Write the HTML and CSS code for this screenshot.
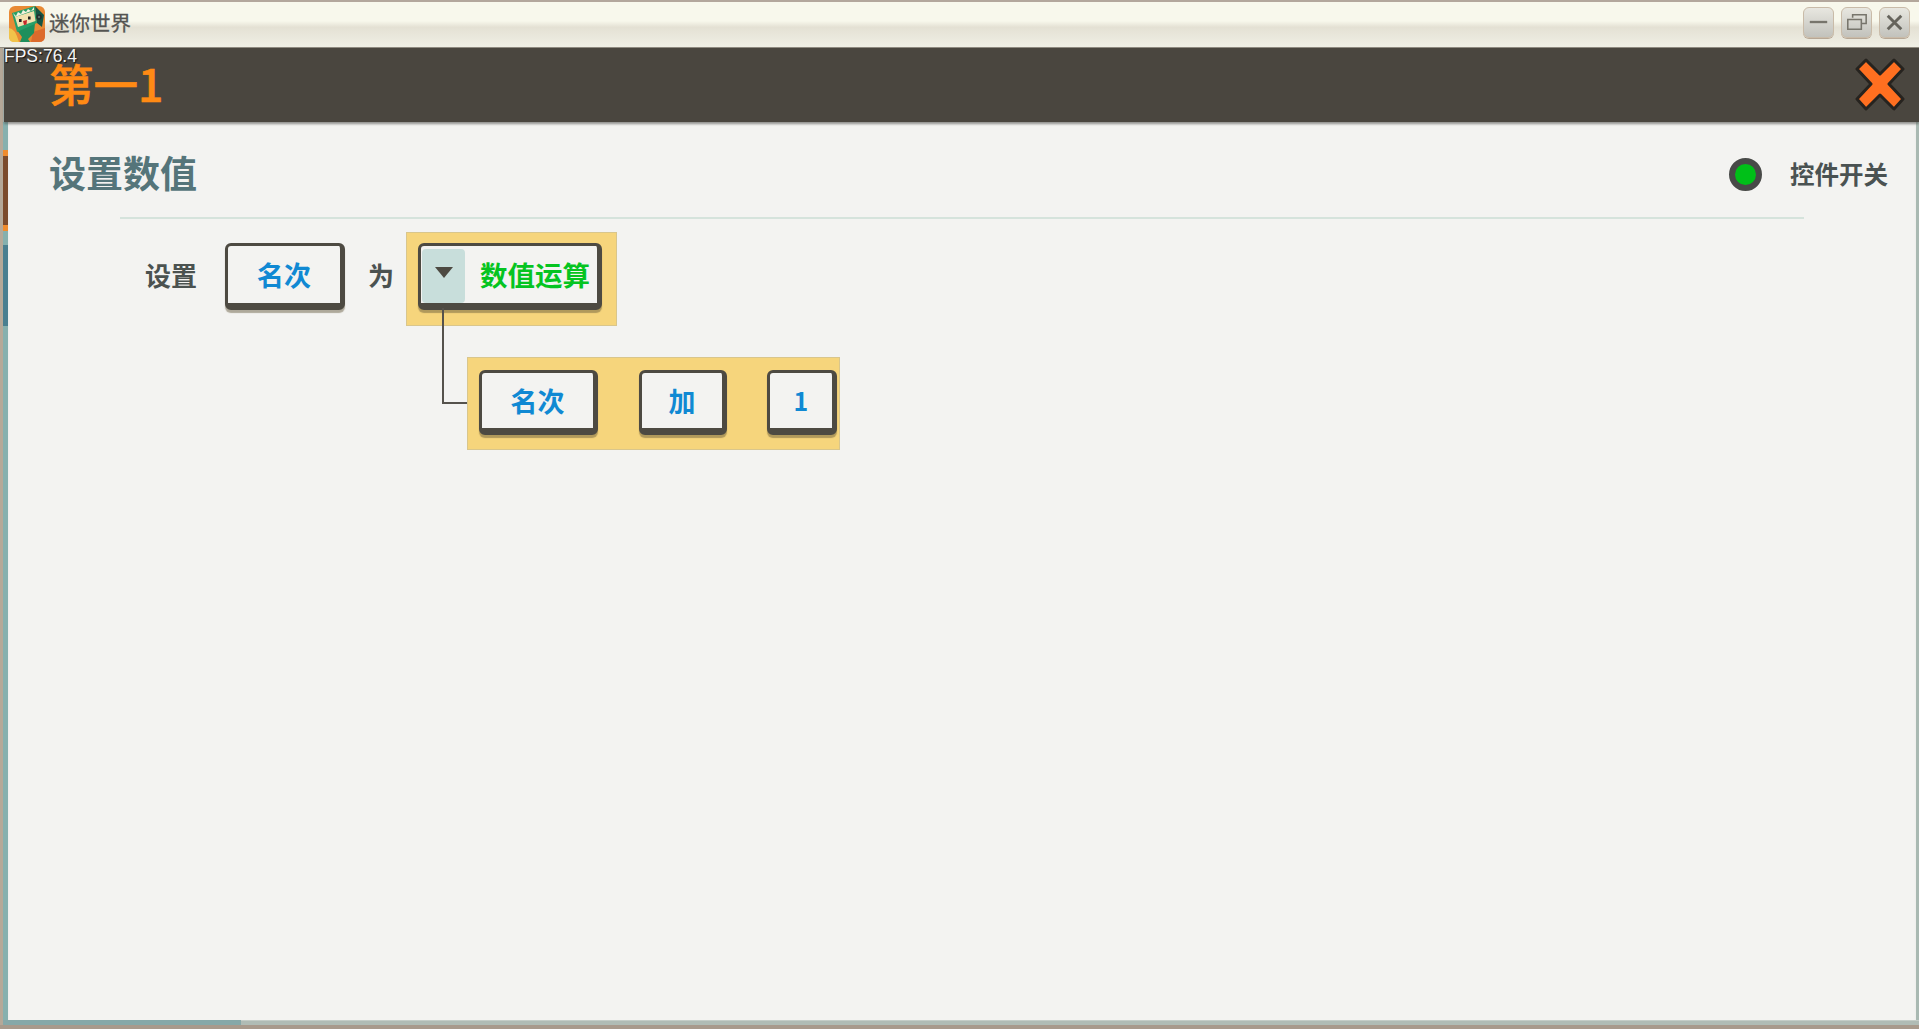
FILE: index.html
```html
<!DOCTYPE html>
<html lang="zh">
<head>
<meta charset="utf-8">
<title>迷你世界</title>
<link rel="stylesheet" href="styles.css">
</head>
<body>
<div class="window">
  <header class="titlebar">
    <svg class="app-icon" viewBox="0 0 36 36">
      <rect width="36" height="36" rx="6" fill="#e88a34"/>
      <path d="M0 22 Q6 22 10 36 H5 Q0 36 0 31Z" fill="#f1c34a"/>
      <path d="M24 26 L36 22 V30 Q36 36 30 36 H22Z" fill="#dc6a2c"/>
      <path d="M8 24 L26 17 L25 27 L19 33 L21 36 H11 L13 31Z" fill="#1e8f5c"/>
      <path d="M3 7 L26 0 L28 17 L8 26Z" fill="#28a068"/>
      <path d="M26 0 L35 9 L33 21 L28 17Z" fill="#155443"/>
      <path d="M6 11 L25 5 L26.500 15 L9 21Z" fill="#f2e2b0"/>
      <path d="M4 7 L7 10 L9 6 L12 8 L14 4 L17 6 L19 3 L22 5 L25 1 L25 4 L6 11Z" fill="#f6f2df"/>
      <rect x="10" y="13" width="2.600" height="3" fill="#222"/>
      <rect x="19" y="10.500" width="2.600" height="3" fill="#222"/>
      <path d="M14 15 L18 14 L17.500 18.500 L15 19Z" fill="#c5282a"/>
      <circle cx="30" cy="11" r="2.800" fill="#20302c"/>
      <circle cx="30" cy="11" r="1.200" fill="#5c6d68"/>
    </svg>
    <span class="app-name">迷你世界</span>
    <div class="win-controls">
      <button class="win-btn" aria-label="minimize"><svg viewBox="0 0 30 30"><path d="M6 14.500H24" stroke="#77756c" stroke-width="2.400"/></svg></button>
      <button class="win-btn" aria-label="restore"><svg viewBox="0 0 30 30"><path d="M11 10V7H25V16H20M6 12H20V22H6Z" fill="none" stroke="#77756c" stroke-width="1.600"/></svg></button>
      <button class="win-btn" aria-label="close"><svg viewBox="0 0 30 30"><path d="M8 8L22 22M22 8L8 22" stroke="#66645c" stroke-width="3"/></svg></button>
    </div>
  </header>

  <div class="fps">FPS:76.4</div>

  <div class="frame">
    <div class="app-header">
      <h1 class="page-title">第一1</h1>
      <svg class="close-x" viewBox="0 0 50 56">
        <path d="M11 3 L25 17 L39 3 L48 12 L34 27 L48 42 L39 52 L25 38 L11 52 L2 42 L16 27 L2 12Z" fill="#ff6f20" stroke="#26231f" stroke-width="3" stroke-linejoin="round"/>
      </svg>
    </div>
    <div class="panel-wrap">
      <aside class="rail">
        <span class="rail-tab"></span>
        <span class="rail-tab2"></span>
      </aside>
      <main class="panel">
        <div class="panel-head">
          <h2 class="panel-title">设置数值</h2>
          <div class="switch">
            <span class="switch-dot"></span>
            <span class="switch-label">控件开关</span>
          </div>
        </div>
        <div class="divider"></div>
        <div class="statement">
          <div class="row">
            <span class="label label-set">设置</span>
            <button class="chip chip-name">名次</button>
            <span class="label label-as">为</span>
            <div class="slot slot-top">
              <div class="chip chip-op">
                <span class="drop"><i class="tri"></i></span>
                <span class="op-text">数值运算</span>
              </div>
              <span class="wire"></span>
            </div>
          </div>
          <div class="slot slot-sub">
            <button class="chip chip-name2">名次</button>
            <button class="chip chip-add">加</button>
            <button class="chip chip-num">1</button>
          </div>
        </div>
      </main>
      <div class="rail-right"></div>
    </div>
    <div class="scrollbar"><span class="thumb"></span></div>
  </div>
</div>
</body>
</html>
```
FILE: styles.css
```css
* { box-sizing: border-box; }
html, body { margin: 0; height: 100%; overflow: hidden; }
body {
  font-family: "Noto Sans CJK SC", "Noto Sans", sans-serif;
  background: #f3f3f1;
}
button { font: inherit; padding: 0; }
h1, h2 { margin: 0; }

.window {
  position: relative;
  width: 1919px;
  height: 1029px;
  display: flex;
  flex-direction: column;
  background: #a89a8c;
  padding-bottom: 4px;
}

.titlebar {
  height: 48px;
  flex: none;
  display: flex;
  align-items: center;
  padding: 0 9px 4px 9px;
  border-top: 2px solid #b3a79c;
  border-bottom: 1px solid #8f8a80;
  background: linear-gradient(#f8f8ec 0, #f8f8ec 42%, #e4e1d4 56%, #f0efe5 100%);
}
.app-icon { width: 36px; height: 36px; flex: none; margin-top: 2px; }
.app-name {
  margin-left: 4px;
  font-size: 20.500px;
  line-height: 1;
  color: #555552;
  -webkit-text-stroke: .3px #555552;
  margin-top: 0;
}
.win-controls { margin-left: auto; display: flex; gap: 7px; margin-top: -1px; }
.win-btn {
  width: 31px;
  height: 31px;
  border: 1px solid #c9bba8;
  border-radius: 6px;
  background: linear-gradient(#e8e7e0, #c2c2bc);
  box-shadow: 0 1px 0 #b7a795;
  display: flex;
}
.win-btn svg { width: 100%; height: 100%; }

.fps {
  position: absolute;
  left: 4px;
  top: 47px;
  font-family: "Liberation Sans", sans-serif;
  font-size: 17.500px;
  line-height: 19px;
  color: #f4f4f4;
  text-shadow: 1px 1px 1px #111;
  z-index: 2;
}

.frame {
  flex: 1;
  min-height: 0;
  display: flex;
  flex-direction: column;
  padding-left: 3px;
  background: #b0bcb5;
  box-shadow: inset 3px 0 0 #b5a898;
}

.app-header {
  height: 74px;
  flex: none;
  margin-left: 1px;
  display: flex;
  align-items: center;
  justify-content: space-between;
  padding: 0 14px 0 45px;
  background: #4a463f;
  box-shadow: 0 2px 2px rgba(60, 60, 55, .45);
  position: relative;
  z-index: 1;
}
.page-title {
  font-size: 44.500px;
  font-weight: 500;
  line-height: 1;
  color: #ff8a14;
  -webkit-text-stroke: .6px #ff8a14;
  margin-top: -3px;
}
.close-x { width: 50px; height: 56px; margin-top: -1px; }

.panel-wrap { flex: 1; min-height: 0; display: flex; }
.rail {
  width: 5px;
  flex: none;
  background: #86b0ae;
  padding-top: 28px;
}
.rail-tab {
  display: block;
  height: 81px;
  background: #7c4b2c;
  border-top: 6px solid #f08c2e;
  border-bottom: 6px solid #f08c2e;
}
.rail-tab2 {
  display: block;
  height: 81px;
  margin-top: 14px;
  background: #4a7f90;
}
.panel {
  flex: 1;
  min-width: 0;
  background: #f3f3f1;
  box-shadow: inset 0 3px 3px -1px rgba(90, 90, 85, .15);
}
.rail-right { width: 3px; flex: none; background: #a9b9b2; }

.panel-head {
  height: 95px;
  display: flex;
  align-items: center;
  justify-content: space-between;
  padding: 8px 28px 0 41px;
}
.panel-title {
  font-size: 37px;
  font-weight: 700;
  line-height: 1;
  color: #55757a;
  margin-top: -2px;
}
.switch { display: flex; align-items: center; margin-top: 2px; }
.switch-dot {
  width: 33px;
  height: 33px;
  border-radius: 50%;
  background: #00c018;
  border: 6px solid #484a48;
}
.switch-label {
  margin-left: 28px;
  font-size: 24.500px;
  font-weight: 700;
  line-height: 1;
  color: #4a5252;
}

.divider {
  height: 2px;
  margin: 0 112px;
  background: #d5e3dc;
}

.statement { padding: 14px 0 0 137px; }
.row { display: flex; align-items: flex-start; }

.label {
  font-size: 26px;
  font-weight: 700;
  line-height: 1;
  color: #4b5250;
}
.label-set { margin-top: 29px; }
.label-as { margin: 29px 13px 0 23px; }

.chip {
  display: flex;
  align-items: center;
  justify-content: center;
  border-style: solid;
  border-color: #4d4a42;
  border-width: 3px 5px 7px 3px;
  border-radius: 6px;
  background: #f3f3f1;
  color: #1089d3;
  font-size: 27px;
  font-weight: 700;
  line-height: 1;
  box-shadow: 0 3px 1px rgba(90, 80, 50, .45);
}
.chip-name { width: 120px; height: 67px; margin: 10px 0 0 28px; }

.slot {
  background: #f6d57c;
  box-shadow: 0 0 0 1px #d9c68c;
  position: relative;
}
.slot-top {
  width: 209px;
  height: 92px;
  padding: 10px 0 0 11px;
}
.chip-op {
  width: 184px;
  height: 67px;
  justify-content: flex-start;
  color: #05c421;
}
.drop {
  width: 43px;
  height: 54px;
  margin-left: 1px;
  margin-top: 2px;
  border-radius: 4px;
  background: #c8dedb;
  display: flex;
  justify-content: center;
  padding-top: 18px;
}
.tri {
  width: 0;
  height: 0;
  border-left: 9px solid transparent;
  border-right: 9px solid transparent;
  border-top: 11px solid #4d4a42;
}
.op-text { margin-left: 15px; font-size: 27.500px; white-space: nowrap; }

.wire {
  position: absolute;
  left: 35px;
  top: 75px;
  width: 27px;
  height: 96px;
  border-left: 2px solid #55524c;
  border-bottom: 2px solid #55524c;
}

.slot-sub {
  width: 371px;
  height: 91px;
  margin: 33px 0 0 323px;
  display: flex;
  align-items: flex-start;
  padding: 12px 0 0 11px;
}
.chip-name2 { width: 119px; height: 65px; }
.chip-add { width: 88px; height: 65px; margin-left: 41px; }
.chip-num { width: 70px; height: 65px; margin-left: 40px; font-size: 25px; }

.scrollbar {
  height: 5px;
  flex: none;
  background: #b0bcb5;
  box-shadow: inset 0 1px 0 #c4cdc7;
}
.thumb {
  display: block;
  width: 238px;
  height: 5px;
  background: #86a8a8;
}
```
